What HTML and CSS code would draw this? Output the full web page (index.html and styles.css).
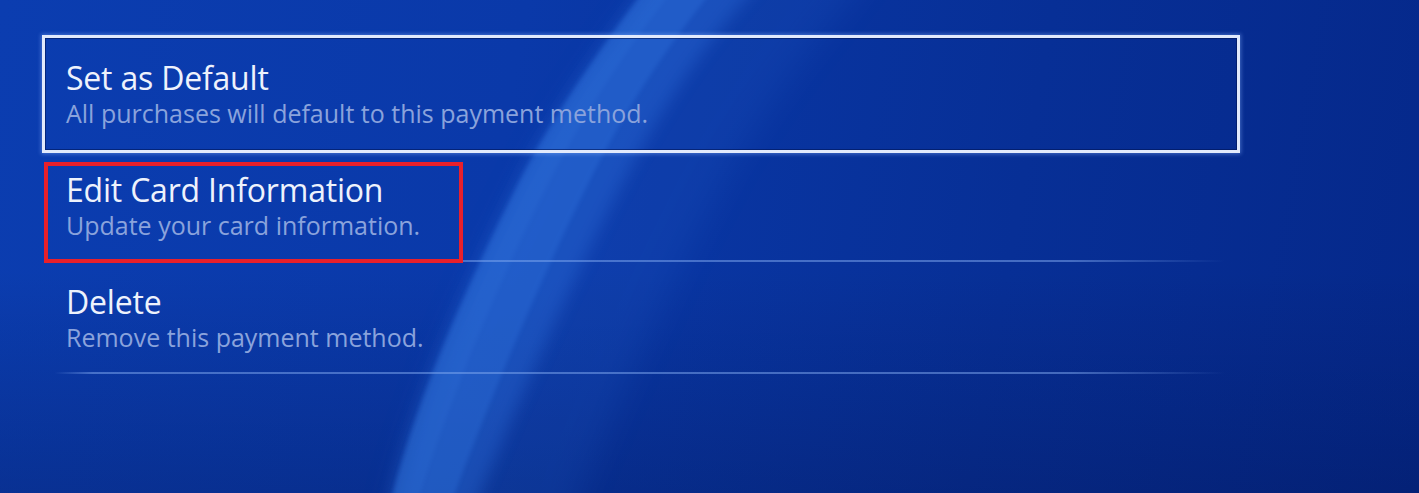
FILE: index.html
```html
<!DOCTYPE html>
<html lang="en">
<head>
<meta charset="utf-8">
<title>Payment Method</title>
<link rel="stylesheet" href="styles.css">
</head>
<body>
<div class="screen">
  <svg class="wave" width="1419" height="493" viewBox="0 0 1419 493" aria-hidden="true">
    <defs>
      <filter id="blurWide" x="-50%" y="-50%" width="200%" height="200%"><feGaussianBlur stdDeviation="16"/></filter>
      <filter id="blurSoft" x="-50%" y="-50%" width="200%" height="200%"><feGaussianBlur stdDeviation="2"/></filter>
      <filter id="blurMid" x="-50%" y="-50%" width="200%" height="200%"><feGaussianBlur stdDeviation="8"/></filter>
    </defs>
    <path d="M668,-40 L637,0 C585,70 545,130 515,190 C470,280 420,390 393,493 L383,540 L570,540 L580,493 C620,400 670,280 730,170 C770,100 810,50 850,0 L880,-40 Z" fill="#2a66d0" opacity="0.16" filter="url(#blurWide)"/>
    <path d="M668,-40 L637,0 C585,70 545,130 515,190 C470,280 420,390 393,493 L383,540 L465,540 L480,493 C520,400 570,280 640,150 C680,80 710,40 745,0 L780,-40 Z" fill="#2d70dc" opacity="0.38" filter="url(#blurMid)"/>
    <path d="M668,-40 L637,0 C585,70 545,130 515,190 C470,280 420,390 393,493 L383,540 L440,540 L455,493 C490,400 535,290 590,180 C625,110 665,50 705,0 L735,-40 Z" fill="#3078e2" opacity="0.30" filter="url(#blurSoft)"/>
    <path d="M668,-40 L637,0 C585,70 545,130 515,190 C470,280 420,390 393,493 L383,540 L410,540 L420,493 C452,395 497,285 545,190 C578,125 615,65 665,0 L695,-40 Z" fill="#3d86ea" opacity="0.12" filter="url(#blurSoft)"/>
  </svg>

  <div class="menu">
    <div class="item selected">
      <div class="title">Set as Default</div>
      <div class="desc">All purchases will default to this payment method.</div>
    </div>
    <div class="item">
      <div class="title">Edit Card Information</div>
      <div class="desc">Update your card information.</div>
      <div class="highlight"></div>
    </div>
    <div class="item">
      <div class="title">Delete</div>
      <div class="desc">Remove this payment method.</div>
    </div>
  </div>
</div>
</body>
</html>
```
FILE: styles.css
```css
html, body {
  margin: 0;
  padding: 0;
}

body {
  width: 1419px;
  height: 493px;
  overflow: hidden;
  font-family: "Open Sans", "Noto Sans", "Liberation Sans", sans-serif;
  background: #072c8e;
}

.screen {
  position: relative;
  width: 1419px;
  height: 493px;
  overflow: hidden;
  background:
    linear-gradient(to bottom, rgba(0, 8, 50, 0) 55%, rgba(0, 8, 50, 0.22) 100%),
    linear-gradient(100deg, #0b3db0 0%, #0a39a9 35%, #072f96 70%, #05288a 100%);
}

.wave {
  position: absolute;
  left: 0;
  top: 0;
  z-index: 0;
}

.menu {
  position: relative;
  z-index: 1;
  display: flex;
  flex-direction: column;
  padding: 38px 0 0 45px;
  width: 1192px;
}

.item {
  position: relative;
  box-sizing: border-box;
  height: 112px;
  padding: 20px 0 0 21px;
  background: linear-gradient(to right,
      rgba(130, 170, 240, 0) 0.8%,
      rgba(130, 170, 240, 0.5) 4%,
      rgba(130, 170, 240, 0.5) 86%,
      rgba(130, 170, 240, 0) 99%) left bottom / 100% 2px no-repeat;
}

.item.selected {
  background: none;
  box-shadow:
    inset 0 0 0 1px rgba(0, 18, 80, 0.55),
    0 0 0 3px #e2eafc,
    0 0 4px 4px rgba(140, 180, 255, 0.45);
}

.title {
  font-size: 32px;
  line-height: 39px;
  letter-spacing: -0.2px;
  color: #eef2fc;
  white-space: nowrap;
}

.desc {
  font-size: 25px;
  line-height: 32px;
  color: #8aa3dc;
  white-space: nowrap;
}

.highlight {
  position: absolute;
  left: -1px;
  top: 12px;
  width: 419px;
  height: 101px;
  box-sizing: border-box;
  border: 4px solid #e8202b;
}
```
